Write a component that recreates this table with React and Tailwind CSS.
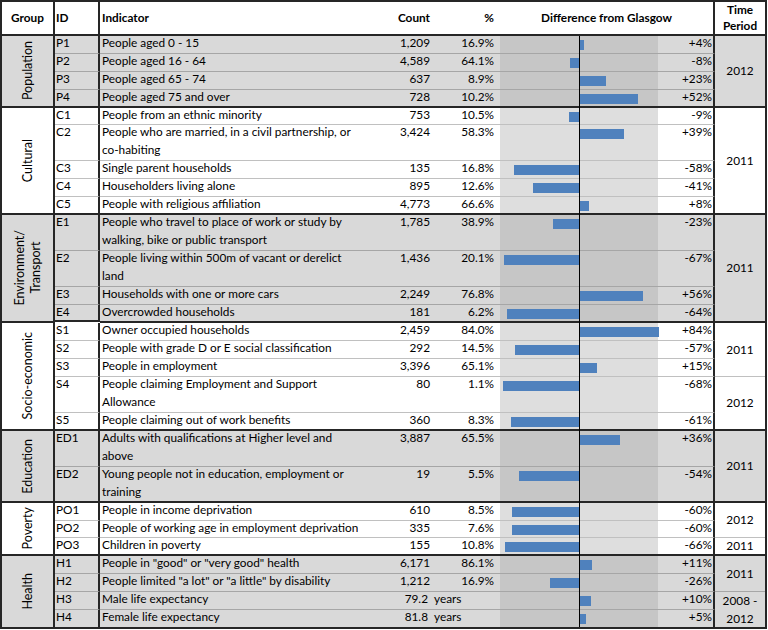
import React from 'react';

const groups = [
  {
    name: ['Population'], gray: true,
    rows: [
      { id: 'P1', text: ['People aged 0 - 15'], count: '1,209', pct: '16.9%', diff: 4, h: 18 },
      { id: 'P2', text: ['People aged 16 - 64'], count: '4,589', pct: '64.1%', diff: -8, h: 18 },
      { id: 'P3', text: ['People aged 65 - 74'], count: '637', pct: '8.9%', diff: 23, h: 18 },
      { id: 'P4', text: ['People aged 75 and over'], count: '728', pct: '10.2%', diff: 52, h: 18 },
    ],
    times: [{ label: ['2012'], span: 4 }],
  },
  {
    name: ['Cultural'], gray: false,
    rows: [
      { id: 'C1', text: ['People from an ethnic minority'], count: '753', pct: '10.5%', diff: -9, h: 17 },
      { id: 'C2', text: ['People who are married, in a civil partnership, or', 'co-habiting'], count: '3,424', pct: '58.3%', diff: 39, h: 36 },
      { id: 'C3', text: ['Single parent households'], count: '135', pct: '16.8%', diff: -58, h: 18 },
      { id: 'C4', text: ['Householders living alone'], count: '895', pct: '12.6%', diff: -41, h: 18 },
      { id: 'C5', text: ['People with religious affiliation'], count: '4,773', pct: '66.6%', diff: 8, h: 18 },
    ],
    times: [{ label: ['2011'], span: 5 }],
  },
  {
    name: ['Environment/', 'Transport'], gray: true,
    rows: [
      { id: 'E1', text: ['People who travel to place of work or study by', 'walking, bike or public transport'], count: '1,785', pct: '38.9%', diff: -23, h: 36 },
      { id: 'E2', text: ['People living within 500m of vacant or derelict', 'land'], count: '1,436', pct: '20.1%', diff: -67, h: 36 },
      { id: 'E3', text: ['Households with one or more cars'], count: '2,249', pct: '76.8%', diff: 56, h: 18 },
      { id: 'E4', text: ['Overcrowded households'], count: '181', pct: '6.2%', diff: -64, h: 17 },
    ],
    times: [{ label: ['2011'], span: 4 }],
  },
  {
    name: ['Socio-economic'], gray: false,
    rows: [
      { id: 'S1', text: ['Owner occupied households'], count: '2,459', pct: '84.0%', diff: 84, h: 18 },
      { id: 'S2', text: ['People with grade D or E social classification'], count: '292', pct: '14.5%', diff: -57, h: 18 },
      { id: 'S3', text: ['People in employment'], count: '3,396', pct: '65.1%', diff: 15, h: 18 },
      { id: 'S4', text: ['People claiming Employment and Support', 'Allowance'], count: '80', pct: '1.1%', diff: -68, h: 36 },
      { id: 'S5', text: ['People claiming out of work benefits'], count: '360', pct: '8.3%', diff: -61, h: 18 },
    ],
    times: [{ label: ['2011'], span: 3 }, { label: ['2012'], span: 2 }],
  },
  {
    name: ['Education'], gray: true,
    rows: [
      { id: 'ED1', text: ['Adults with qualifications at Higher level and', 'above'], count: '3,887', pct: '65.5%', diff: 36, h: 36 },
      { id: 'ED2', text: ['Young people not in education, employment or', 'training'], count: '19', pct: '5.5%', diff: -54, h: 36 },
    ],
    times: [{ label: ['2011'], span: 2 }],
  },
  {
    name: ['Poverty'], gray: false,
    rows: [
      { id: 'PO1', text: ['People in income deprivation'], count: '610', pct: '8.5%', diff: -60, h: 18 },
      { id: 'PO2', text: ['People of working age in employment deprivation'], count: '335', pct: '7.6%', diff: -60, h: 17 },
      { id: 'PO3', text: ['Children in poverty'], count: '155', pct: '10.8%', diff: -66, h: 18 },
    ],
    times: [{ label: ['2012'], span: 2 }, { label: ['2011'], span: 1 }],
  },
  {
    name: ['Health'], gray: true,
    rows: [
      { id: 'H1', text: ['People in "good" or "very good" health'], count: '6,171', pct: '86.1%', diff: 11, h: 18 },
      { id: 'H2', text: ['People limited "a lot" or "a little" by disability'], count: '1,212', pct: '16.9%', diff: -26, h: 18 },
      { id: 'H3', text: ['Male life expectancy'], count: '79.2', years: true, diff: 10, h: 18 },
      { id: 'H4', text: ['Female life expectancy'], count: '81.8', years: true, diff: 5, h: 17 },
    ],
    times: [{ label: ['2011'], span: 2 }, { label: ['2008 -', '2012'], span: 2 }],
  },
];

const heightClass = { 17: 'h-[17px]', 18: 'h-[18px]', 36: 'h-[36px]' };
const spanClass = { 1: 'row-span-1', 2: 'row-span-2', 3: 'row-span-3', 4: 'row-span-4', 5: 'row-span-5' };

function Bar({ v }) {
  const w = Math.min(Math.abs(v) * 1.12, 79);
  const style = v > 0 ? { left: 80, width: w } : { left: 79 - w, width: w };
  return <div className="absolute top-[4px] h-[10px] bg-[#4f81bd]" style={style} />;
}

function Txt({ children, className = '' }) {
  return <div className={'-mt-[2px] leading-[18px] whitespace-nowrap ' + className}>{children}</div>;
}

export default function App() {
  const cells = [];
  groups.forEach((g, gi) => {
    const lastGroup = gi === groups.length - 1;
    const bg = g.gray ? 'bg-[#d9d9d9]' : 'bg-white';
    const band = g.gray ? 'bg-[#c6c6c6]' : 'bg-[#dedede]';
    const light = g.gray ? 'border-b border-[#a6a6a6]' : 'border-b border-[#c0c0c0]';
    const dark = 'border-b-2 border-[#262626]';
    const timeStarts = {};
    let acc = 0;
    g.times.forEach((t, ti) => {
      timeStarts[acc] = { ...t, last: ti === g.times.length - 1 };
      acc += t.span;
    });
    g.rows.forEach((r, ri) => {
      const lastRow = ri === g.rows.length - 1;
      const rb = lastRow ? (lastGroup ? '' : dark) : light;
      const axisBottom = lastRow ? (lastGroup ? 'bottom-0' : '-bottom-[2px]') : '-bottom-px';
      if (ri === 0) {
        cells.push(
          <div
            key={g.name[0]}
            className={`${spanClass[g.rows.length]} ${bg} border-r-2 border-r-[#262626] ${lastGroup ? '' : dark} flex items-center justify-center`}
          >
            <div className="[writing-mode:vertical-rl] rotate-180 text-center leading-[16px] text-[12.5px]">
              {g.name.map((n) => (
                <div key={n}>{n}</div>
              ))}
            </div>
          </div>
        );
      }
      cells.push(
        <div key={r.id + 'id'} className={`${heightClass[r.h]} ${bg} ${rb} border-r-2 border-r-[#262626] pl-px`}>
          <Txt>{r.id}</Txt>
        </div>
      );
      cells.push(
        <div key={r.id + 'tx'} className={`${bg} ${rb} pl-[2px]`}>
          <Txt>
            {r.text.map((t) => (
              <div key={t}>{t}</div>
            ))}
          </Txt>
        </div>
      );
      cells.push(
        <div key={r.id + 'ct'} className={`${bg} ${rb} ${r.years ? 'pr-[6px]' : 'pr-[4px]'} text-right`}>
          <Txt>{r.count}</Txt>
        </div>
      );
      cells.push(
        <div key={r.id + 'pc'} className={`${bg} ${rb} ${r.years ? 'text-left' : 'text-right pr-[6px]'}`}>
          <Txt>{r.years ? 'years' : r.pct}</Txt>
        </div>
      );
      cells.push(
        <div key={r.id + 'bd'} className={`${band} ${rb} relative`}>
          <Bar v={r.diff} />
          <div className={`absolute left-[79px] top-0 ${axisBottom} w-px bg-black`} />
        </div>
      );
      cells.push(
        <div key={r.id + 'df'} className={`${bg} ${rb} border-r-2 border-r-[#262626] text-right pr-px`}>
          <Txt>{(r.diff > 0 ? '+' : '') + r.diff + '%'}</Txt>
        </div>
      );
      const t = timeStarts[ri];
      if (t) {
        const tb = t.last ? (lastGroup ? '' : dark) : light;
        cells.push(
          <div
            key={r.id + 'tm'}
            className={`${spanClass[t.span]} ${bg} ${tb} flex flex-col items-center justify-center`}
          >
            <div className="-my-[2px] leading-[18px] text-center">
              {t.label.map((l) => (
                <div key={l}>{l}</div>
              ))}
            </div>
          </div>
        );
      }
    });
  });

  return (
    <div className="w-[768px] h-[630px] bg-white">
      <div className="w-[767px] border-2 border-[#262626] font-['Lato','Liberation_Sans',sans-serif] text-[11.8px] text-black">
        <div className="grid grid-cols-[53px_45px_258px_76px_66px_158px_57px_50px]">
          <div className="h-[34px] border-b-2 border-[#262626] border-r-2 border-r-[#262626] flex items-center justify-center font-bold">
            Group
          </div>
          <div className="border-b-2 border-[#262626] border-r-2 border-r-[#262626] flex items-center pl-px font-bold">ID</div>
          <div className="border-b-2 border-[#262626] flex items-center pl-[2px] font-bold">Indicator</div>
          <div className="border-b-2 border-[#262626] flex items-center justify-end pr-[4px] font-bold">Count</div>
          <div className="border-b-2 border-[#262626] flex items-center justify-end pr-[6px] font-bold">%</div>
          <div className="col-span-2 border-b-2 border-[#262626] border-r-2 border-r-[#262626] flex items-center justify-center font-bold">
            Difference from Glasgow
          </div>
          <div className="border-b-2 border-[#262626] flex flex-col items-center justify-center font-bold leading-[16px]">
            <div>Time</div>
            <div>Period</div>
          </div>
          {cells}
        </div>
      </div>
    </div>
  );
}
